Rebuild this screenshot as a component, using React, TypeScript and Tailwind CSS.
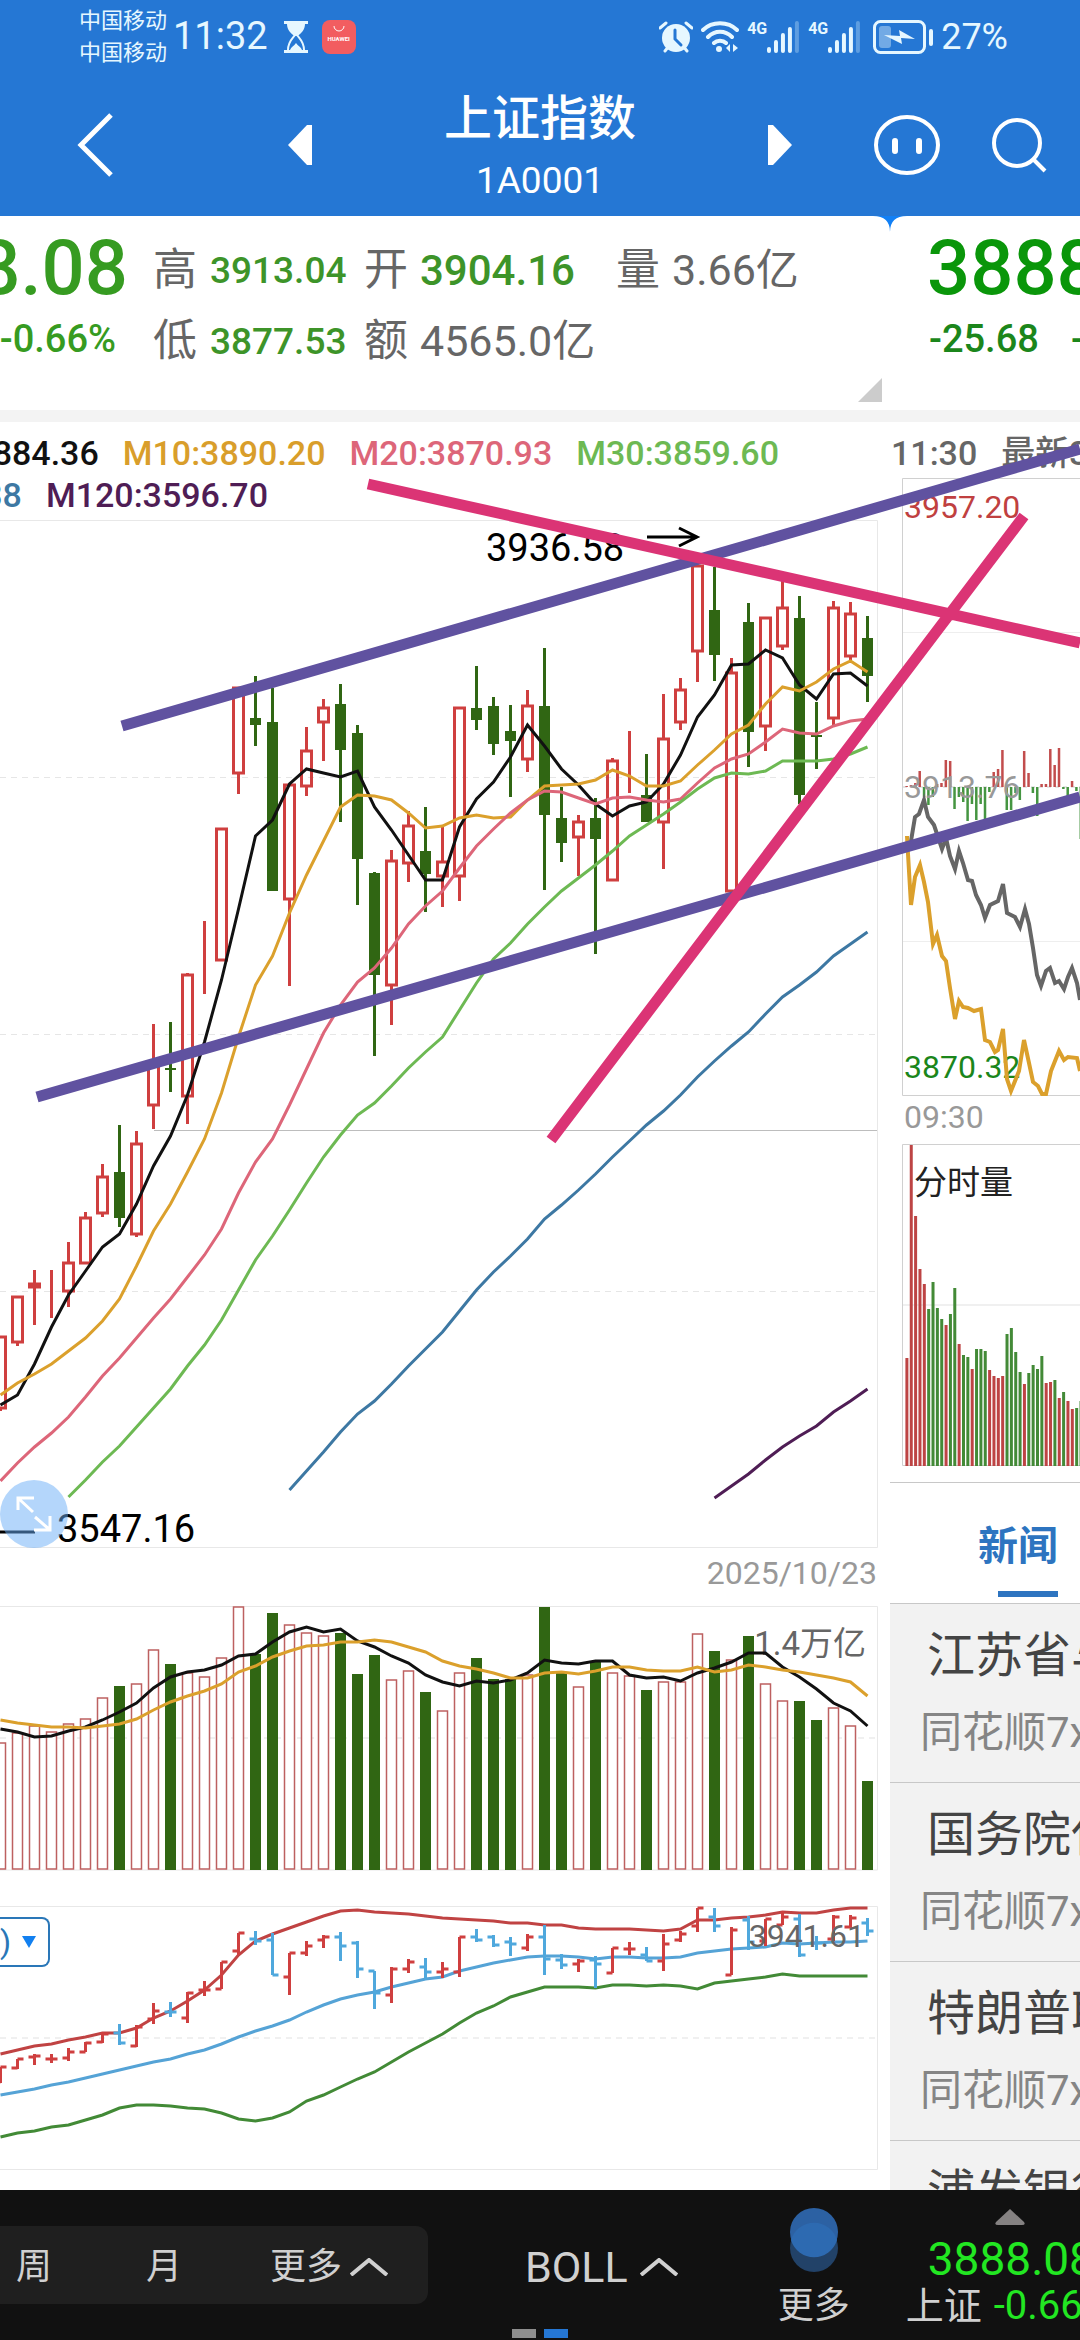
import type { ReactNode } from "react";

type Candle = {
  up: boolean;
  high: number;
  top: number;
  bottom: number;
  low: number;
};

const FONT = "font-['Roboto','Noto_Sans_CJK_SC',sans-serif]";

// [up, high, body top, body bottom, low], all as y positions of the price pane
const rawCandles: [number, number, number, number, number][] = [
  [1, 1336, 1337, 1408, 1411],
  [1, 1296, 1297, 1342, 1346],
  [1, 1270, 1284, 1287, 1325],
  [1, 1270, 1295, 1295, 1318],
  [1, 1242, 1263, 1291, 1307],
  [1, 1212, 1218, 1263, 1263],
  [1, 1164, 1177, 1213, 1217],
  [0, 1125, 1172, 1218, 1227],
  [1, 1131, 1144, 1234, 1237],
  [1, 1024, 1063, 1105, 1129],
  [0, 1022, 1068, 1068, 1092],
  [1, 973, 975, 1096, 1124],
  [1, 921, 963, 963, 994],
  [1, 828, 829, 960, 960],
  [1, 687, 688, 773, 794],
  [0, 676, 718, 725, 746],
  [0, 688, 722, 891, 891],
  [1, 784, 785, 899, 986],
  [1, 727, 751, 786, 796],
  [1, 699, 708, 722, 761],
  [0, 684, 704, 750, 822],
  [0, 725, 733, 859, 905],
  [0, 872, 873, 975, 1056],
  [1, 850, 861, 985, 1025],
  [1, 811, 826, 863, 882],
  [0, 807, 851, 874, 912],
  [1, 827, 862, 876, 907],
  [1, 707, 708, 876, 901],
  [0, 666, 708, 720, 730],
  [0, 697, 706, 744, 755],
  [0, 705, 731, 741, 797],
  [1, 690, 706, 759, 772],
  [0, 648, 706, 815, 890],
  [0, 787, 818, 843, 862],
  [1, 815, 822, 837, 876],
  [0, 798, 818, 839, 954],
  [1, 758, 761, 880, 881],
  [1, 731, 762, 762, 793],
  [0, 754, 795, 822, 822],
  [1, 694, 739, 822, 869],
  [1, 678, 690, 722, 730],
  [1, 565, 566, 651, 682],
  [0, 567, 610, 655, 681],
  [1, 658, 673, 891, 891],
  [0, 603, 622, 732, 767],
  [1, 617, 618, 726, 751],
  [1, 581, 608, 646, 650],
  [0, 596, 618, 795, 804],
  [0, 702, 735, 735, 769],
  [1, 601, 608, 718, 725],
  [1, 602, 614, 656, 663],
  [0, 616, 638, 676, 702],
];

const candles: Candle[] = rawCandles.map(([up, high, top, bottom, low]) => ({
  up: up === 1,
  high,
  top,
  bottom,
  low,
}));

const averages = [
  {
    color: "#111111",
    start: 0,
    ys: [1405, 1395, 1364, 1327, 1295, 1271, 1247, 1234, 1204, 1166, 1136, 1095, 1042, 980, 909, 836, 820, 784, 769, 773, 777, 771, 807, 830, 855, 880, 880, 827, 799, 782, 757, 725, 746, 769, 785, 804, 816, 806, 802, 784, 755, 717, 695, 665, 664, 650, 658, 685, 699, 674, 673, 686],
  },
  {
    color: "#dba02c",
    start: 0,
    ys: [1395, 1383, 1374, 1364, 1351, 1338, 1321, 1299, 1266, 1231, 1204, 1172, 1139, 1093, 1037, 985, 956, 913, 875, 841, 807, 795, 796, 800, 813, 828, 826, 818, 815, 818, 817, 800, 786, 785, 784, 780, 770, 776, 786, 786, 781, 765, 750, 734, 725, 704, 687, 691, 682, 669, 661, 672],
  },
  {
    color: "#dd6679",
    start: 0,
    ys: [1481, 1463, 1447, 1433, 1417, 1397, 1376, 1358, 1338, 1318, 1299, 1277, 1255, 1229, 1193, 1162, 1139, 1105, 1069, 1033, 1005, 982, 968, 948, 924, 906, 891, 868, 846, 829, 813, 800, 791, 792, 798, 804, 798, 797, 800, 802, 799, 783, 768, 759, 754, 742, 729, 733, 734, 726, 721, 719],
  },
  {
    color: "#6db953",
    start: 4,
    ys: [1497, 1480, 1462, 1446, 1427, 1408, 1389, 1366, 1345, 1320, 1290, 1260, 1236, 1210, 1183, 1157, 1135, 1115, 1103, 1086, 1068, 1052, 1037, 1010, 983, 959, 943, 924, 907, 891, 878, 865, 851, 836, 825, 814, 802, 789, 778, 773, 774, 771, 761, 761, 761, 759, 754, 747],
  },
  {
    color: "#3d78a3",
    start: 17,
    ys: [1490, 1471, 1452, 1432, 1414, 1401, 1384, 1366, 1349, 1332, 1311, 1290, 1272, 1256, 1239, 1219, 1205, 1190, 1174, 1157, 1141, 1125, 1111, 1095, 1077, 1061, 1046, 1032, 1014, 997, 985, 972, 956, 944, 932],
  },
  {
    color: "#4f1d55",
    start: 42,
    ys: [1498, 1486, 1474, 1460, 1447, 1436, 1426, 1412, 1401, 1389],
  },
];

const volumeTops = [1743, 1733, 1726, 1732, 1724, 1719, 1698, 1686, 1684, 1650, 1664, 1673, 1677, 1658, 1607, 1654, 1613, 1625, 1633, 1636, 1633, 1674, 1655, 1680, 1671, 1692, 1711, 1673, 1658, 1679, 1679, 1675, 1607, 1673, 1687, 1662, 1673, 1676, 1690, 1682, 1682, 1634, 1651, 1660, 1636, 1684, 1701, 1701, 1720, 1708, 1726, 1781];

const volumeM5 = [1729, 1732, 1737, 1736, 1731, 1727, 1720, 1712, 1703, 1688, 1677, 1672, 1670, 1665, 1656, 1654, 1642, 1632, 1627, 1632, 1629, 1641, 1647, 1656, 1663, 1675, 1682, 1686, 1681, 1683, 1680, 1673, 1660, 1663, 1664, 1661, 1661, 1675, 1678, 1677, 1681, 1673, 1668, 1662, 1653, 1653, 1667, 1677, 1689, 1703, 1711, 1726];
const volumeM10 = [1720, 1723, 1725, 1727, 1727, 1728, 1726, 1724, 1719, 1710, 1702, 1696, 1691, 1684, 1672, 1666, 1657, 1651, 1646, 1645, 1642, 1642, 1640, 1642, 1647, 1652, 1661, 1666, 1669, 1673, 1678, 1678, 1673, 1672, 1674, 1671, 1667, 1667, 1670, 1671, 1671, 1667, 1672, 1670, 1665, 1667, 1670, 1672, 1675, 1678, 1682, 1696];

const bollUpper = [2054, 2050, 2046, 2044, 2040, 2037, 2033, 2033, 2028, 2018, 2011, 2001, 1990, 1975, 1955, 1941, 1934, 1928, 1922, 1916, 1911, 1910, 1912, 1913, 1914, 1916, 1918, 1919, 1920, 1921, 1923, 1923, 1925, 1925, 1928, 1929, 1929, 1929, 1930, 1931, 1929, 1920, 1920, 1918, 1917, 1915, 1912, 1913, 1913, 1910, 1908, 1908];
const bollMid = [2095, 2092, 2089, 2085, 2082, 2078, 2074, 2070, 2066, 2062, 2059, 2054, 2050, 2044, 2037, 2031, 2026, 2020, 2012, 2005, 1999, 1995, 1992, 1987, 1983, 1979, 1977, 1971, 1967, 1963, 1960, 1957, 1956, 1956, 1957, 1959, 1957, 1957, 1958, 1958, 1957, 1953, 1951, 1949, 1948, 1947, 1943, 1944, 1943, 1942, 1942, 1941];
const bollLower = [2137, 2133, 2131, 2127, 2125, 2120, 2115, 2108, 2105, 2105, 2106, 2108, 2109, 2113, 2119, 2121, 2118, 2112, 2101, 2095, 2087, 2079, 2072, 2062, 2052, 2043, 2034, 2023, 2013, 2006, 1997, 1992, 1987, 1987, 1987, 1988, 1985, 1985, 1986, 1985, 1986, 1989, 1983, 1981, 1979, 1977, 1974, 1976, 1976, 1976, 1976, 1976];

// minute bars: positive is red, negative is green
const minuteVolume = [108, 321, 250, 197, 182, -157, -184, -158, -147, 141, -152, -178, 122, -111, -109, 97, -117, -117, -115, 96, 90, 88, 90, -132, -138, -114, -94, 82, -93, -101, -97, -110, 83, 84, -86, 68, -74, 65, 57, -58, -65];
const minuteFlow = [1, 2, 4, 16, -10, -18, -10, 3, 4, 27, 26, -22, -10, -15, -34, -17, -33, -17, -33, -5, 15, 18, 37, -23, -23, -6, -13, 36, 14, -6, -29, 3, 3, 38, 22, 39, -2, -17, 6, -4, -52];

const minutePrice =
  "911,841 915,817 919,814 924,800 928,817 934,825 937,834 942,849 946,838 950,856 955,869 959,851 963,863 968,880 972,881 976,895 981,905 985,918 990,905 998,901 1003,884 1007,913 1015,917 1020,927 1025,909 1029,924 1033,948 1037,975 1041,986 1046,971 1050,968 1055,983 1059,981 1064,989 1068,977 1072,968 1077,983 1080,1000";
const minuteAverage =
  "907,836 908,854 911,905 915,877 920,865 924,882 928,902 933,944 937,935 942,956 946,961 950,988 955,1019 959,1001 963,1007 968,1008 974,1011 981,1009 985,1040 990,1042 995,1052 998,1050 1003,1029 1007,1079 1011,1091 1019,1071 1024,1040 1029,1063 1033,1082 1038,1086 1042,1094 1046,1094 1051,1071 1059,1051 1064,1060 1068,1057 1077,1058 1080,1071";

const news = ["江苏省与", "国务院任", "特朗普取", "浦发银行"];

const cx = (i: number) => 17 * i + 0.5;
const line = (ys: number[], start = 0) =>
  ys.map((y, i) => `${cx(start + i)},${y}`).join(" ");
const bollY = (y: number) => Math.round(y * 0.2067 + 1791);
const minuteX = (i: number) => 905.4 + i * 4.353;

function StatusBar() {
  return (
    <div className="flex h-[73px] items-center pl-[79px] pr-[72px] text-[#e6f7ff]">
      <div className="text-[22px] leading-8">
        <p>中国移动</p>
        <p>中国移动</p>
      </div>
      <span className="ml-1.5 text-[38px]">11:32</span>
      <svg className="ml-4 h-8 w-6" viewBox="0 0 24 32" fill="currentColor">
        <path d="M0 0h24v3H0zM0 29h24v3H0z" />
        <path d="M3 3h18c0 6-4 9-7 12h-4C7 12 3 9 3 3z" />
        <path d="M11 14C8 18 4 21 4 29M13 14c3 4 7 7 7 15" fill="none" stroke="currentColor" strokeWidth="2" />
        <path d="M6 29c1-3 4-4 6-7 2 3 5 4 6 7z" />
      </svg>
      <span className="ml-3.5 flex h-[34px] w-[34px] flex-col items-center rounded-lg bg-[#f25d60] text-white">
        <svg className="mt-1.5 h-2 w-3" viewBox="0 0 12 8" fill="none" stroke="currentColor" strokeWidth="1">
          <path d="M1 0a5 5 0 0 0 10 0" />
        </svg>
        <span className="mt-px text-[6px] font-bold leading-2">HUAWEI</span>
      </span>

      <div className="ml-auto flex items-center">
        <svg className="h-8 w-[34px]" viewBox="0 0 34 32">
          <path d="M1 7l6-5M33 7l-6-5M6 30l4-5M28 30l-4-5" stroke="currentColor" strokeWidth="3" strokeLinecap="round" />
          <circle cx="17" cy="17" r="14" fill="currentColor" />
          <path d="M16 9v9l6 6" fill="none" stroke="#2577d4" strokeWidth="3" strokeLinecap="round" />
        </svg>
        <svg className="ml-2 h-8 w-[38px]" viewBox="0 0 38 32" fill="none" stroke="currentColor" strokeWidth="4" strokeLinecap="round">
          <path d="M2 9c9-9 25-9 34 0M7 16c7-7 17-7 24 0M13 22c3-3 9-3 12 0" />
          <circle cx="18" cy="28" r="3" fill="currentColor" stroke="none" />
          <path d="M29 23v8l-4-4zM32 23v8l5-4z" fill="currentColor" stroke="none" />
        </svg>
        <SignalIcon />
        <SignalIcon />
        <svg className="ml-3 h-[34px] w-[60px]" viewBox="0 0 60 34" fill="currentColor">
          <rect x="1.5" y="1.5" width="50" height="31" rx="6" fill="none" stroke="currentColor" strokeWidth="3" />
          <rect x="6" y="6" width="12" height="22" rx="3" opacity="0.4" />
          <rect x="56" y="9" width="4" height="17" rx="2" />
          <path d="M11 15l16 1-1-6 16 9-14-1 1 6z" />
        </svg>
        <span className="ml-2 text-[36px]">27%</span>
      </div>
    </div>
  );
}

function SignalIcon() {
  return (
    <span className="ml-2 flex h-8 w-[53px] items-end">
      <span className="self-start font-['Roboto'] text-[16px] font-bold leading-4">4G</span>
      <svg className="h-8 w-[33px]" viewBox="0 0 33 32" fill="currentColor">
        <rect x="0" y="26" width="4" height="6" rx="2" />
        <rect x="7" y="19" width="4" height="13" rx="2" />
        <rect x="14" y="12" width="4" height="20" rx="2" />
        <rect x="21" y="6" width="4" height="26" rx="2" />
        <rect x="28" y="0" width="4" height="32" rx="2" opacity="0.3" />
      </svg>
    </span>
  );
}

function NavBar() {
  return (
    <nav className="grid h-[143px] grid-cols-[1fr_auto_1fr] items-center text-white">
      <div className="flex items-center pl-[77px]">
        <button type="button" aria-label="返回">
          <svg className="h-16 w-9" viewBox="0 0 36 64" fill="none" stroke="currentColor" strokeWidth="5">
            <path d="M34 2L4 32l30 30" />
          </svg>
        </button>
        <button type="button" aria-label="上一只" className="ml-[175px]">
          <svg className="h-10 w-6" viewBox="0 0 24 40" fill="currentColor">
            <path d="M24 0v40h-5L0 20 19 0z" />
          </svg>
        </button>
      </div>
      <div className="pt-2.5 text-center">
        <h1 className="text-[48px] font-medium leading-[62px]">上证指数</h1>
        <p className="text-[37px] leading-[62px]">1A0001</p>
      </div>
      <div className="flex items-center pl-[132px]">
        <button type="button" aria-label="下一只">
          <svg className="h-10 w-6" viewBox="0 0 24 40" fill="currentColor">
            <path d="M0 0v40h5l19-20L5 0z" />
          </svg>
        </button>
        <button type="button" aria-label="助手" className="ml-[82px]">
          <svg className="h-[62px] w-[66px]" viewBox="0 0 66 62" fill="none" stroke="currentColor">
            <ellipse cx="33" cy="31" rx="31" ry="28" strokeWidth="4" />
            <path d="M21 27v10M45 27v10" strokeWidth="6" strokeLinecap="round" />
          </svg>
        </button>
        <button type="button" aria-label="搜索" className="ml-[52px]">
          <svg className="h-14 w-[55px]" viewBox="0 0 55 56" fill="none" stroke="currentColor" strokeWidth="4">
            <circle cx="25" cy="26" r="23" />
            <path d="M41 42l12 12" />
          </svg>
        </button>
      </div>
    </nav>
  );
}

function QuoteItem({ label, children }: { label: string; children: ReactNode }) {
  return (
    <>
      <dt className="text-[44px] text-[#666]">{label}</dt>
      <dd className="flex items-center whitespace-nowrap">{children}</dd>
    </>
  );
}

function QuotePanel() {
  return (
    <section className="relative flex h-[194px] pt-5">
      <div className="flex w-[128px] flex-col items-end overflow-hidden font-medium text-[#369b21]">
        <p className="text-[76px] leading-[64px]">888.08</p>
        <p className="pr-3 text-[38px] leading-[78px]">-0.66%</p>
      </div>
      <dl className="ml-[25px] grid grid-cols-[57px_154px_56px_196px_56px_auto] content-start gap-y-0.5 leading-[69px]">
        <QuoteItem label="高">
          <span className="text-[37px] font-medium text-[#3d9429]">3913.04</span>
        </QuoteItem>
        <QuoteItem label="开">
          <span className="text-[42px] font-medium text-[#3d9429]">3904.16</span>
        </QuoteItem>
        <QuoteItem label="量">
          <span className="text-[43px] text-[#666]">3.66亿</span>
        </QuoteItem>
        <QuoteItem label="低">
          <span className="text-[37px] font-medium text-[#3d9429]">3877.53</span>
        </QuoteItem>
        <QuoteItem label="额">
          <span className="text-[43px] text-[#666]">4565.0亿</span>
        </QuoteItem>
      </dl>
      <svg className="absolute bottom-2 right-2 h-6 w-6" viewBox="0 0 24 24" fill="#cccccc">
        <path d="M24 0v24H0z" />
      </svg>
    </section>
  );
}

function MaLegend() {
  return (
    <div className="h-[98px] overflow-hidden pt-2.5 text-[34px] font-medium leading-[42px]">
      <p className="flex justify-end gap-6 whitespace-nowrap pr-[111px]">
        <span className="text-[#111]">3884.36</span>
        <span className="text-[#d99e2b]">M10:3890.20</span>
        <span className="text-[#dd6679]">M20:3870.93</span>
        <span className="text-[#6db953]">M30:3859.60</span>
      </p>
      <p className="flex w-[268px] justify-end gap-6 whitespace-nowrap">
        <span className="text-[#3d78a3]">38</span>
        <span className="text-[#4f1d55]">M120:3596.70</span>
      </p>
    </div>
  );
}

function PricePane() {
  return (
    <div className="relative">
      <svg className="block w-full" viewBox="0 520 890 1028">
        <path d="M0 520.5H877.5V1547.5H0" fill="none" stroke="#e8e8e8" />
        {[777.5, 1034.5, 1291.5].map((y) => (
          <path key={y} d={`M0 ${y}H876`} stroke="#e6e6e6" strokeDasharray="6 5" />
        ))}
        <path d="M154 1130.5H877" stroke="#bdbdbd" />

        {candles.map((c, i) =>
          c.up ? (
            <g key={i} stroke="#cf3f3f" strokeWidth="3" fill="none">
              <path d={`M${cx(i)} ${c.high}V${c.top}M${cx(i)} ${c.bottom}V${c.low}`} />
              <rect x={cx(i) - 5} y={c.top} width="10" height={c.bottom - c.top} />
            </g>
          ) : (
            <g key={i} fill="#306613">
              <rect x={cx(i) - 1.5} y={c.high} width="3" height={c.low - c.high} />
              <rect x={cx(i) - 5.5} y={c.top} width="11" height={Math.max(c.bottom - c.top, 2)} />
            </g>
          )
        )}

        {averages.map((ma) => (
          <polyline key={ma.color} points={line(ma.ys, ma.start)} fill="none" stroke={ma.color} strokeWidth="3" />
        ))}

        <text x="486" y="561" fontSize="38" fill="#000">3936.58</text>
        <path d="M647 537H697M679 528L697 537L679 546" fill="none" stroke="#000" strokeWidth="3" />
        <path d="M0 1532H35" stroke="#000" strokeWidth="3" />
        <text x="57" y="1542" fontSize="38" fill="#000">3547.16</text>
      </svg>
      <button
        type="button"
        aria-label="全屏"
        className="absolute bottom-0 left-0 flex h-[68px] w-[68px] items-center justify-center rounded-full bg-[#6aaef8]/50 text-white"
      >
        <svg className="h-9 w-9" viewBox="0 0 36 36" fill="none" stroke="currentColor" strokeWidth="3">
          <path d="M2 14V2h16M2 2l15 14M34 20v14H18M34 34L19 21" />
        </svg>
      </button>
    </div>
  );
}

function VolumePane() {
  return (
    <svg className="block w-full" viewBox="0 1606 890 265">
      <path d="M0 1606.5H877.5V1870H0" fill="none" stroke="#e8e8e8" />
      <path d="M0 1738H876" stroke="#f0f0f0" strokeWidth="2" strokeDasharray="6 5" />
      {volumeTops.map((y, i) =>
        candles[i].up ? (
          <rect key={i} x={cx(i) - 5} y={y} width="10" height={1869 - y} fill="#fff" stroke="#bd6060" strokeWidth="1.5" />
        ) : (
          <rect key={i} x={cx(i) - 5.5} y={y} width="11" height={1870 - y} fill="#306613" />
        )
      )}
      <text x="866" y="1655" fontSize="33" fill="#666" textAnchor="end">1.4万亿</text>
      <polyline points={line(volumeM5)} fill="none" stroke="#111" strokeWidth="3" />
      <polyline points={line(volumeM10)} fill="none" stroke="#dba02c" strokeWidth="3" />
    </svg>
  );
}

function BollPane() {
  return (
    <div className="relative mt-[35px]">
      <svg className="block w-full" viewBox="0 1906 890 264">
        <path d="M0 1906.5H877.5V2169.5H0" fill="none" stroke="#e8e8e8" />
        <path d="M0 2038H876" stroke="#f0f0f0" strokeWidth="2" strokeDasharray="6 5" />
        <polyline points={line(bollMid)} fill="none" stroke="#55a3d6" strokeWidth="3" />
        <polyline points={line(bollUpper)} fill="none" stroke="#c04343" strokeWidth="3" />
        <polyline points={line(bollLower)} fill="none" stroke="#428a36" strokeWidth="3" />
        {candles.map((c, i) => {
          const open = bollY(c.up ? c.bottom : c.top);
          const close = bollY(c.up ? c.top : c.bottom);
          return (
            <path
              key={i}
              d={`M${cx(i)} ${bollY(c.high)}V${bollY(c.low)}M${cx(i) - 6} ${open}H${cx(i)}M${cx(i)} ${close}H${cx(i) + 6}`}
              stroke={c.up ? "#cf3f3f" : "#4fa8dd"}
              strokeWidth="3"
            />
          );
        })}
        <text x="865" y="1947" fontSize="32" fill="#666" textAnchor="end">3941.61</text>
      </svg>
      <button
        type="button"
        aria-label="选择指标"
        className="absolute left-0 top-[11px] flex h-[50px] w-[50px] items-center justify-between rounded-r-lg border-2 border-l-0 border-[#2a77b8] bg-white pr-3 text-[32px] leading-8 text-[#2a77b8]"
      >
        <span>)</span>
        <svg className="h-3 w-[14px]" viewBox="0 0 14 12" fill="#1280f0">
          <path d="M0 0h14L7 12z" />
        </svg>
      </button>
    </div>
  );
}

function MinuteChart() {
  return (
    <svg className="block w-full" viewBox="890 474 190 1008">
      <path d="M1080 478.5H902.5V1095.5H1080" fill="none" stroke="#d0d0d0" />
      <path d="M903 632.5H1080M903 941.5H1080" stroke="#eeeeee" />
      <path d="M903 787H1080" stroke="#ccc" strokeDasharray="4 4" />
      <text x="904" y="518" fontSize="32" fill="#c04040">3957.20</text>
      {minuteFlow.map((v, i) => (
        <rect
          key={i}
          x={minuteX(i)}
          y={v > 0 ? 787 - v : 787}
          width="2.5"
          height={Math.abs(v)}
          fill={v > 0 ? "#c24d4d" : "#459541"}
        />
      ))}
      <text x="904" y="798" fontSize="32" fill="#999">3913.76</text>
      <text x="904" y="1078" fontSize="32" fill="#1b861b">3870.32</text>
      <polyline points={minutePrice} fill="none" stroke="#666" strokeWidth="4" />
      <polyline points={minuteAverage} fill="none" stroke="#dba02c" strokeWidth="4" />
      <text x="904" y="1128" fontSize="32" fill="#999">09:30</text>

      <path d="M1080 1144.5H902.5V1465.5H1080" fill="none" stroke="#d0d0d0" />
      <path d="M903 1305H1080" stroke="#f0f0f0" strokeWidth="2" />
      {minuteVolume.map((v, i) => (
        <rect
          key={i}
          x={minuteX(i)}
          y={1466 - Math.abs(v)}
          width="3"
          height={Math.abs(v)}
          fill={v > 0 ? "#bd4444" : "#438a37"}
        />
      ))}
      <text x="914" y="1194" fontSize="33" fill="#222">分时量</text>
    </svg>
  );
}

function SidePanel() {
  return (
    <aside className="w-[190px] shrink-0 overflow-hidden whitespace-nowrap">
      <section className="h-[194px] pl-[37px] pt-5 font-medium">
        <p className="text-[76px] leading-[64px] text-[#0a960a]">3888.08</p>
        <p className="flex gap-8 pl-0.5 text-[38px] leading-[78px] text-[#1b861b]">
          <span>-25.68</span>
          <span>-0.66%</span>
        </p>
      </section>
      <div className="h-3 bg-[#f3f3f3]" />
      <p className="flex h-[52px] gap-6 pl-px pt-2.5 text-[34px] font-medium leading-[42px] text-[#666]">
        <span>11:30</span>
        <span>最新3888.08</span>
      </p>
      <MinuteChart />
      <div className="flex h-[122px] border-y border-[#c8c8c8] pl-[88px]">
        <button type="button" className="flex flex-col items-center pt-5 text-[40px] font-bold text-[#2d74c0]">
          <span className="leading-[88px]">新闻</span>
          <span className="h-1.5 w-[60px] self-end bg-[#2d74c0]" />
        </button>
      </div>
      <ul className="bg-[#f2f2f2]">
        {news.map((title) => (
          <li key={title} className="h-[179px] border-b border-[#c8c8c8] pt-[17px]">
            <a href="#news" className="block">
              <p className="pl-[37px] text-[48px] leading-[70px] text-[#444]">{title}</p>
              <p className="pl-[30px] text-[42px] leading-[84px] text-[#858585]">同花顺7x24</p>
            </a>
          </li>
        ))}
      </ul>
    </aside>
  );
}

// hand drawn trend lines lie over both panels
function TrendLines() {
  return (
    <svg
      className="pointer-events-none absolute inset-0 h-full w-full"
      viewBox="0 216 1080 1974"
      preserveAspectRatio="none"
      strokeWidth="11"
    >
      <path d="M122 726L1080 449M37 1097L1080 797" stroke="#6052a0" />
      <path d="M368 484L1080 643M551 1140L1024 516" stroke="#db3475" />
    </svg>
  );
}

function Chevron() {
  return (
    <svg className="h-[18px] w-[38px]" viewBox="0 0 38 18" fill="none" stroke="currentColor" strokeWidth="4">
      <path d="M1 17L19 2l18 15" />
    </svg>
  );
}

function BottomBar() {
  return (
    <footer className="relative flex h-[150px] shrink-0 items-stretch overflow-hidden whitespace-nowrap bg-[#111] text-[36px] text-[#d0d0d0]">
      <div className="my-9 flex w-[428px] shrink-0 items-center rounded-r-xl bg-[#1f1f1f] pl-4 pt-1">
        <button type="button">周</button>
        <button type="button" className="ml-[94px]">月</button>
        <button type="button" className="ml-[88px] flex items-center gap-2">
          更多
          <Chevron />
        </button>
      </div>
      <button type="button" className="ml-[97px] flex shrink-0 items-center gap-3 pt-1 text-[43px]">
        BOLL
        <Chevron />
      </button>
      <button type="button" className="ml-[100px] flex shrink-0 flex-col items-center pt-[18px]">
        <svg className="h-16 w-12" viewBox="0 0 48 64">
          <circle cx="24" cy="40" r="24" fill="#224268" />
          <circle cx="24" cy="24" r="24" fill="#2c61a3" />
          <path d="M1 32a24 24 0 0 1 46 0a24 24 0 0 1-46 0z" fill="#2d6ab1" />
        </svg>
        <span className="leading-[68px]">更多</span>
      </button>
      <div className="ml-14 flex-1 overflow-hidden pt-[19px]">
        <svg className="ml-[89px] block h-4 w-[30px]" viewBox="0 0 30 16" fill="#858282">
          <path d="M15 0l14 13q2 3-2 3H3q-4 0-2-3z" />
        </svg>
        <p className="mt-2 pl-[22px] text-[46px] leading-[52px] text-[#22e722]">3888.08</p>
        <p className="flex items-center gap-3 text-[38px] leading-[42px]">
          上证 <span className="text-[40px] text-[#22e722]">-0.66%</span>
        </p>
      </div>
      <div className="absolute inset-x-0 bottom-0.5 flex justify-center gap-2">
        <span className="h-[9px] w-6 bg-[#8e8e8e]" />
        <span className="h-[9px] w-6 bg-[#2577d4]" />
      </div>
    </footer>
  );
}

export default function App() {
  return (
    <div className={`flex h-screen flex-col overflow-hidden bg-white ${FONT}`}>
      <header className="shrink-0 bg-[#2577d4]">
        <StatusBar />
        <NavBar />
      </header>
      <main className="relative flex min-h-0 flex-1 overflow-hidden">
        <div className="min-w-0 flex-1 overflow-hidden">
          <QuotePanel />
          <div className="h-3 bg-[#f3f3f3]" />
          <MaLegend />
          <PricePane />
          <p className="mb-2 pr-[13px] text-right text-[32px] leading-[50px] text-[#999]">2025/10/23</p>
          <VolumePane />
          <BollPane />
        </div>
        <SidePanel />
        <svg className="absolute right-[173px] top-0 h-4 w-[34px]" viewBox="0 0 34 16" fill="#1280f5">
          <path d="M0 0Q17 0 17 16Q17 0 34 0z" />
        </svg>
        <TrendLines />
      </main>
      <BottomBar />
    </div>
  );
}
